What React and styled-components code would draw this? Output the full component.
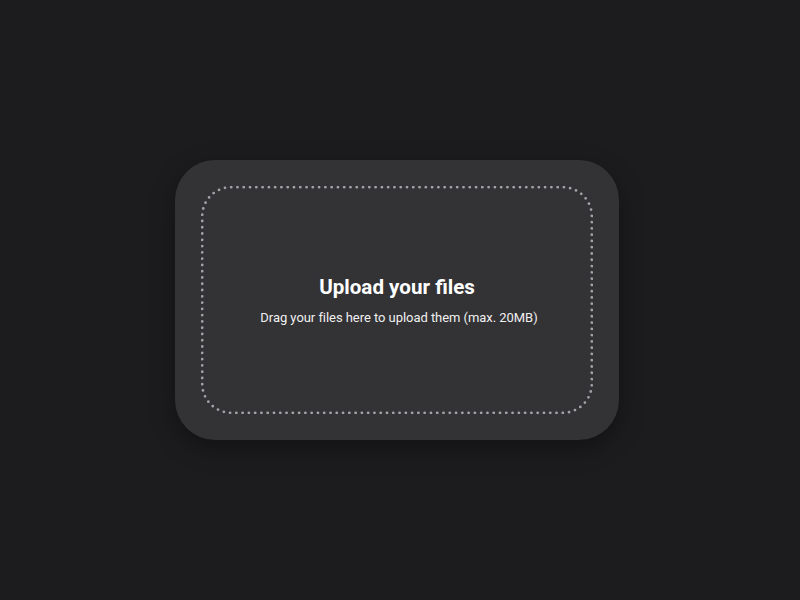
import styled, { createGlobalStyle } from 'styled-components';

const GlobalStyle = createGlobalStyle`
  html, body {
    margin: 0;
    padding: 0;
    background: #1c1b1e;
    font-family: Roboto, "Liberation Sans", sans-serif;
  }
`;

const Page = styled.div`
  width: 800px;
  height: 600px;
  display: flex;
  align-items: center;
  justify-content: center;
  padding-right: 6px;
  box-sizing: border-box;
`;

const Card = styled.div`
  width: 444px;
  height: 280px;
  box-sizing: border-box;
  padding: 26px;
  background: #333235;
  border-radius: 40px;
  box-shadow: 0 8px 24px rgba(0, 0, 0, 0.35);
`;

const DropZone = styled.div`
  position: relative;
  height: 100%;
  box-sizing: border-box;
  padding-bottom: 1px;
  display: flex;
  flex-direction: column;
  align-items: center;
  justify-content: center;
  color: #ffffff;
`;

// dotted outline drawn as round-capped dashes
const Outline = styled.svg`
  position: absolute;
  inset: 0;
  pointer-events: none;
`;

const Title = styled.h2`
  margin: 0 0 11px;
  font-size: 20.6px;
  font-weight: 700;
`;

const Hint = styled.p`
  margin: 0 0 0 4px;
  font-size: 13px;
  color: #f0f0f0;
  letter-spacing: -0.05px;
`;

export default function App() {
  return (
    <>
      <GlobalStyle />
      <Page>
        <Card>
          <DropZone>
            <Outline width="392" height="228" viewBox="0 0 392 228">
              <rect
                x="1.2"
                y="1.2"
                width="389.6"
                height="225.6"
                rx="29"
                fill="none"
                stroke="#a3a2a7"
                strokeWidth="2.8"
                strokeLinecap="round"
                pathLength="188"
                strokeDasharray="0 1"
              />
            </Outline>
            <Title>Upload your files</Title>
            <Hint>Drag your files here to upload them (max. 20MB)</Hint>
          </DropZone>
        </Card>
      </Page>
    </>
  );
}
